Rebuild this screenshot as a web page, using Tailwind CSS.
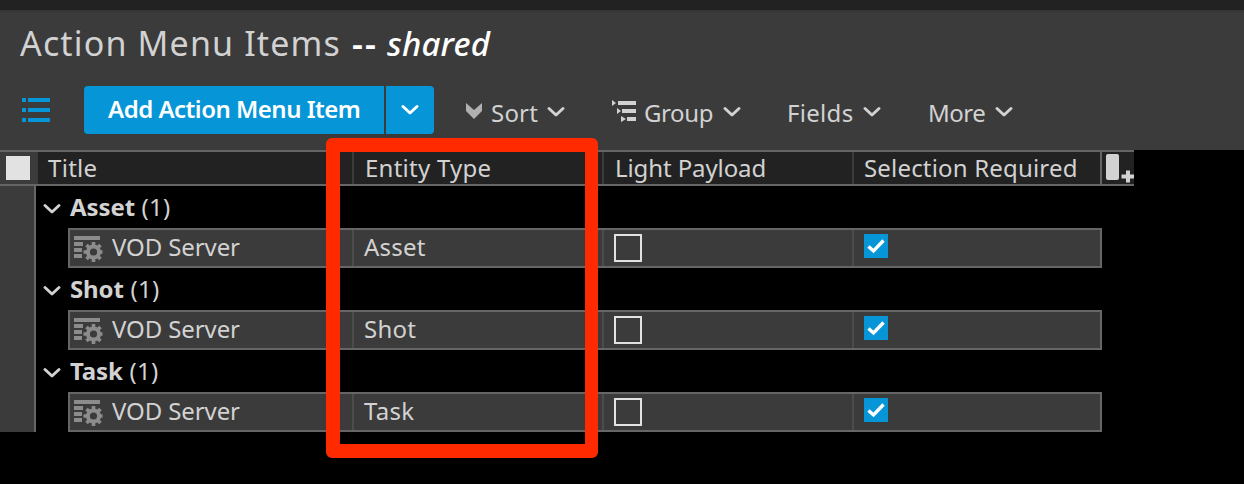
<!DOCTYPE html>
<html lang="en">
<head>
<meta charset="utf-8">
<title>Action Menu Items</title>
<script src="https://cdn.jsdelivr.net/npm/@tailwindcss/browser@4"></script>
</head>
<body class="bg-black">
<svg class="hidden">
  <symbol id="chev" viewBox="0 0 18 12"><path d="M2 2.500 L9 9 L16 2.500" fill="none" stroke="currentColor" stroke-width="2.900" stroke-linecap="round" stroke-linejoin="round"/></symbol>
  <symbol id="gear" viewBox="0 0 30 28">
    <path d="M1 1h26v4H1zM1 7h9v4H1zM1 13h8v4H1zM1 19h8v4H1z" fill="currentColor"/>
    <circle cx="20.500" cy="17" r="5.600" fill="none" stroke="currentColor" stroke-width="4"/>
    <path d="M20.500 7v4M20.500 23v4M10.500 17h4M26.500 17h3M13.500 10l2.600 2.600M24.900 21.400l2.600 2.600M27.500 10l-2.600 2.600M16.100 21.400l-2.600 2.600" stroke="currentColor" stroke-width="3.600"/>
  </symbol>
  <symbol id="tick" viewBox="0 0 24 24"><path d="M4.500 12.500 L9.500 17 L19.500 6.500" fill="none" stroke="#fff" stroke-width="3.400"/></symbol>
</svg>
<div class="relative h-[484px] w-[1244px] overflow-hidden bg-black font-['Noto_Sans',sans-serif] text-2xl leading-8 whitespace-nowrap text-[#d2d2d2]">
  <header class="flex h-[150px] flex-col bg-[#3b3b3b]">
    <div class="h-[10px] shrink-0 bg-[#222]"></div>
    <div class="h-[3px] shrink-0 bg-linear-to-b from-[#333] to-[#3b3b3b]"></div>
    <h1 class="mt-[6px] flex h-12 items-center pl-[20px] text-[34px]">
      <span class="w-[332px] tracking-[1.150px]">Action Menu Items</span>
      <span class="w-[35px] text-[34px] font-semibold tracking-[2px] text-white">--</span>
      <span class="pt-px text-[33px] font-medium text-white italic tracking-[0.200px]">shared</span>
    </h1>
    <div class="mt-[19px] flex h-12 items-start">
      <svg class="mt-3 ml-[22px] h-6 w-7 shrink-0" viewBox="0 0 28 24"><path d="M0 0h4v4H0zM6 0h22v4H6zM0 10h4v4H0zM6 10h22v4H6zM0 20h4v4H0zM6 20h22v4H6z" fill="#0696d7"/></svg>
      <div class="ml-[34px] flex h-12 w-[350px] gap-0.5 overflow-hidden rounded-[4px] text-white">
        <div class="flex w-[300px] items-center bg-[#0696d7] pb-0.5 pl-6 font-semibold tracking-[-0.500px]">Add Action Menu Item</div>
        <div class="flex w-12 items-center justify-center bg-[#0696d7]"><svg class="h-3 w-[18px]"><use href="#chev"/></svg></div>
      </div>
      <div class="flex h-12 items-center pt-[6px]">
        <div class="flex w-[146px] items-center pl-8"><svg class="-mt-1 h-4 w-4" viewBox="0 0 16 16"><path d="M0 0l8 7 8-7v8l-8 8-8-8z" fill="#b0b0b0"/></svg><span class="ml-[9px] w-[56px] tracking-[0.200px]">Sort</span><svg class="-mt-0.5 h-3 w-[18px] shrink-0"><use href="#chev"/></svg></div>
        <div class="flex w-[174px] items-center pl-8"><svg class="-mt-1 h-[22px] w-6 shrink-0" viewBox="0 0 24 22"><path d="M6 1h18v4H6zM10 9h14v4H10zM15 17h9v4h-9zM0 0l4 3-4 3zM5 8l4 3-4 3zM9 16l5 3-5 3z" fill="currentColor"/></svg><span class="ml-2 w-[79px] shrink-0 tracking-[-0.400px]">Group</span><svg class="-mt-0.5 h-3 w-[18px] shrink-0"><use href="#chev"/></svg></div>
        <div class="flex w-[141px] items-center pl-[33px]"><span class="w-[76px] shrink-0 tracking-[0.300px]">Fields</span><svg class="-mt-0.5 h-3 w-[18px] shrink-0"><use href="#chev"/></svg></div>
        <div class="flex items-center pl-[33px]"><span class="w-[67px] shrink-0 tracking-[-0.500px]">More</span><svg class="-mt-0.5 h-3 w-[18px] shrink-0"><use href="#chev"/></svg></div>
      </div>
    </div>
  </header>
  <div class="flex h-9 w-[1134px] border-y-2 border-[#666] bg-[#222] leading-[31px]">
    <div class="flex w-[38px] items-center bg-[#3b3b3b] pl-[6px]"><div class="h-6 w-6 bg-[#e2e2e2]"></div></div>
    <div class="w-[316px] border-r-2 border-[#3b3b3b] pl-[10px] tracking-[0.300px]">Title</div>
    <div class="w-[250px] border-r-2 border-[#3b3b3b] pl-[11px] tracking-[0.250px]">Entity Type</div>
    <div class="w-[250px] border-r-2 border-[#3b3b3b] pl-[11px] tracking-[-0.100px]">Light Payload</div>
    <div class="w-[248px] border-r-2 border-[#666] pl-[10px] tracking-[0.180px]">Selection Required</div>
    <svg class="h-8 w-8" viewBox="0 0 32 32"><rect x="4" y="2" width="13" height="26" rx="2" fill="#d2d2d2"/><path d="M24 18.500h4v4h4v4h-4v4h-4v-4h-4.500v-4H24z" fill="#d2d2d2"/></svg>
  </div>
  <main class="flex h-[246px]">
    <div class="w-9 border-r-2 border-[#666] bg-[#3b3b3b]"></div>
    <div id="groups" class="w-[1066px]"></div>
  </main>
  <div class="absolute top-[138px] left-[326px] h-[320px] w-[272px] rounded-[6px] border-[14px] border-r-[13px] border-[#ff2a00]"></div>
</div>
<script>
document.getElementById('groups').innerHTML = ['Asset', 'Shot', 'Task'].map(n => `
  <section class="h-[82px]">
    <div class="flex h-[42px] items-center pl-[7px]"><svg class="mt-[3px] h-3 w-[18px] shrink-0"><use href="#chev"/></svg><span class="ml-[9px] tracking-[0.300px]"><b class="font-bold tracking-[-0.100px]">${n}</b> (1)</span></div>
    <div class="ml-8 flex h-10 w-[1034px] border-2 border-[#666] bg-[#3b3b3b]">
      <div class="flex w-[284px] items-center border-r-2 border-[#4c4c4c] pl-[3px]"><svg class="mt-0.5 h-7 w-[30px] text-[#8c8c8c]"><use href="#gear"/></svg><span class="mb-0.5 ml-[9px] tracking-[-0.100px]">VOD Server</span></div>
      <div class="flex w-[250px] items-center border-r-2 border-[#4c4c4c] pb-0.5 pl-[10px] tracking-[0.250px]">${n}</div>
      <div class="w-[250px] border-r-2 border-[#4c4c4c] pt-1 pl-[10px]"><div class="h-7 w-7 border-2 border-[#e2e2e2]"></div></div>
      <div class="pt-1 pl-[10px]"><svg class="h-6 w-6 bg-[#0696d7]"><use href="#tick"/></svg></div>
    </div>
  </section>`).join('');
</script>
</body>
</html>
